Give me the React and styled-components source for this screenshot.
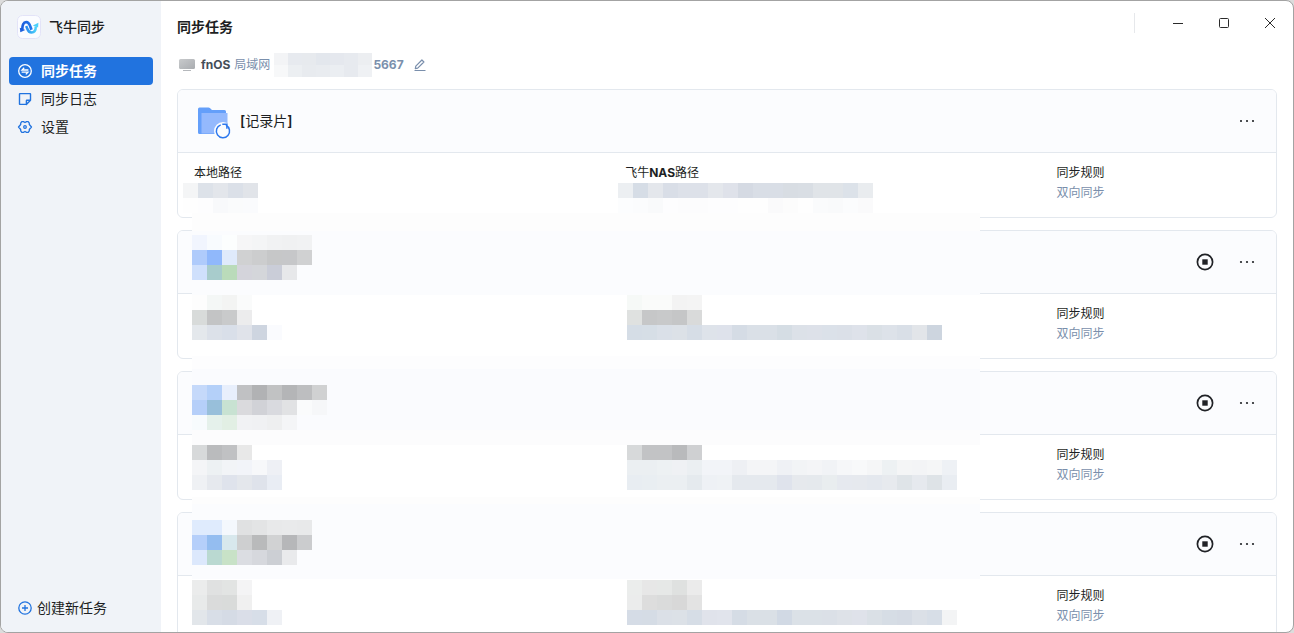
import React, { useState } from 'react';
import styled, { createGlobalStyle } from 'styled-components';

const GlobalStyle = createGlobalStyle`
  * {
    box-sizing: border-box;
  }

  body {
    margin: 0;
    background: #dcdcdc;
    color: #1d1f23;
    font-family: Inter, 'Noto Sans CJK SC', sans-serif;
    font-size: 14px;
    line-height: 20px;
  }

  h1, h2, dl, dd {
    margin: 0;
  }

  button {
    font: inherit;
    color: inherit;
    background: none;
    border: none;
    padding: 0;
    cursor: pointer;
  }

  svg {
    display: block;
    flex-shrink: 0;
  }
`;

const Window = styled.div`
  display: flex;
  height: 100vh;
  background: #fff;
  border: 1px solid #a3a3a3;
  border-radius: 8px;
  overflow: hidden;
`;

const Sidebar = styled.aside`
  display: flex;
  flex-direction: column;
  flex: 0 0 160px;
  padding: 0 8px 10px;
  background: #f0f3f8;
`;

const Brand = styled.div`
  display: flex;
  align-items: center;
  gap: 8px;
  height: 52px;
  margin-bottom: 4px;
  padding-left: 8px;
  font-weight: 500;
`;

const Nav = styled.nav`
  display: flex;
  flex-direction: column;
  flex: 1;
`;

const NavItem = styled.button`
  display: flex;
  align-items: center;
  gap: 8px;
  height: 28px;
  padding: 0 8px;
  border-radius: 4px;
  text-align: left;
  color: ${({ $active }) => ($active ? '#fff' : '#1d1f23')};
  background: ${({ $active }) => ($active ? '#2173df' : 'transparent')};
  font-weight: ${({ $active }) => ($active ? 700 : 400)};

  svg {
    color: ${({ $active }) => ($active ? '#fff' : '#2173df')};
  }
`;

const CreateButton = styled(NavItem)`
  gap: 4px;
`;

const Main = styled.main`
  flex: 1;
  min-width: 0;
  display: flex;
  flex-direction: column;
`;

const TitleBar = styled.header`
  display: flex;
  justify-content: space-between;
  height: 52px;
  padding-left: 16px;
`;

const PageTitle = styled.h1`
  align-self: center;
  font-size: 14px;
  line-height: 20px;
  font-weight: 700;
`;

const Controls = styled.div`
  display: flex;
  height: 44px;
  align-items: center;
`;

const Divider = styled.span`
  width: 1px;
  height: 20px;
  margin-right: 20px;
  background: #e6e8eb;
`;

const ControlButton = styled.button`
  display: grid;
  place-items: center;
  width: 46px;
  height: 44px;
`;

const Device = styled.div`
  display: flex;
  align-items: center;
  gap: 4px;
  height: 24px;
  margin-bottom: 12px;
  padding-left: 16px;
  font-size: 12px;
  color: #7a8fac;
`;

const DeviceName = styled.strong`
  font-weight: 700;
  color: #454e59;
`;

const Address = styled.span`
  display: flex;
  align-items: center;
  gap: 1px;
  font-weight: 700;
`;

const EditButton = styled.button`
  display: grid;
  place-items: center;
  width: 24px;
  height: 24px;
`;

const TaskList = styled.div`
  flex: 1;
  min-height: 0;
  padding: 0 16px;
  overflow: hidden;
`;

const Card = styled.article`
  position: relative;
  margin-bottom: 12px;
  border: 1px solid #e3e8ee;
  border-radius: 6px;
`;

const CardHeader = styled.div`
  display: flex;
  align-items: center;
  gap: 6px;
  height: 63px;
  padding: 0 15px 0 16px;
  background: #fbfcfe;
  border-bottom: 1px solid #e3e8ee;
  border-radius: 5px 5px 0 0;
`;

const TaskName = styled.h2`
  font-size: 14px;
  line-height: 20px;
  font-weight: 400;

  b {
    font-weight: 600;
  }
`;

const Actions = styled.div`
  display: flex;
  gap: 14px;
  margin-left: auto;
`;

const IconButton = styled.button`
  display: grid;
  place-items: center;
  width: 28px;
  height: 28px;
`;

const Fields = styled.dl`
  display: grid;
  grid-template-columns: 2fr 2fr 1fr;
  column-gap: 24px;
  height: 64px;
  padding: 10px 16px;
  font-size: 12px;
`;

const Field = styled.div`
  grid-column: ${({ $column }) => $column};

  dt strong {
    font-weight: 700;
  }

  dd {
    color: #7a8fac;
  }
`;

// Lies over the card and hides private names and paths.
const MosaicLayer = styled.svg`
  position: absolute;
  top: 0;
  left: 0;
  overflow: visible;
  pointer-events: none;
`;

const CELL = 15;

const Patch = ({ x, y, rows }) =>
  rows.map((row, r) =>
    row.split(' ').map((color, c) => (
      <rect key={`${r}-${c}`} x={x + c * CELL} y={y + r * CELL} width={CELL} height={CELL} fill={`#${color}`} />
    ))
  );

const Mosaic = ({ backdrops = [], patches }) => (
  <MosaicLayer width="802" height="127" shapeRendering="crispEdges" aria-hidden="true">
    {backdrops.map(([y, height, fill]) => (
      <rect key={y} x="14" y={y} width="788" height={height} fill={fill} />
    ))}
    {patches.map((patch) => (
      <Patch key={`${patch.x}-${patch.y}`} {...patch} />
    ))}
  </MosaicLayer>
);

const tasks = [
  {
    id: 1,
    name: '记录片',
    patches: [
      { x: 5, y: 93, rows: ['f4f5f6 dde2e9 e3e6eb dbe0e8 e1e4e9', 'fefefe fdfdfe f8f9fb fafbfc fafbfd'] },
      {
        x: 440,
        y: 93,
        rows: [
          'eceff2 d6dde6 e4e7ec d9dee7 dde1e9 dde1e9 e4e7ec dfe2ea d5dae3 d9dee6 d9dee6 d8dde3 d9dee4 e0e4e8 e0e4e8 dce2e9 e9ecef',
          'fcfdfe fbfcfd f9fafb fdfdfe fcfcfd fcfcfd fdfdfe fdfdfe fefefe fefefe fafafb fcfcfc fefefe fafbfc f9fafb fbfcfd fafafb',
        ],
      },
    ],
  },
  {
    id: 2,
    running: true,
    backdrops: [[-18, 18, '#fdfdfd'], [0, 64, '#fbfcfe'], [64, 60, '#fff']],
    patches: [
      {
        x: 14,
        y: 4,
        rows: [
          'f1f5fe f8fbfe fcfefe f6f6f7 f4f5f6 f1f2f3 f0f1f2 f1f2f3',
          'afcbfb 90b8fb dfeafb d0d1d2 cccdce c6c7c8 c6c7c9 d0d1d2',
          'cfe0fc a8cccc badbba d4d4db d4d6da cacdd8 e7e8ea',
        ],
      },
      {
        x: 14,
        y: 64,
        rows: [
          'fdfdfd f4f7f6 f3f4f3 fafbfb',
          'd8dbda c3c4c5 c9cacb ececed',
          'e4e8ec dce1e9 d9dfe9 e0e3ea ced5e0 fafbfe',
        ],
      },
      {
        x: 449,
        y: 64,
        rows: [
          'f6f9f7 fafbfa fafbfa f3f3f3 f4f4f4',
          'dfe1e0 c6c7c8 c8c9ca c5c6c7 d9dada',
          'd5dde6 d6dee6 dae0e8 dce1e7 d6dde6 dee3ea dee2eb d5dce5 dae0e7 dae0e7 d5dde4 dce1e8 dde1e9 dbe1e9 dbe0e8 dee2ea dae0e6 dde2e9 d9dfe7 e2e5e9 cdd5df',
        ],
      },
    ],
  },
  {
    id: 3,
    running: true,
    backdrops: [[-16, 13, '#fdfdfe'], [-3, 62, '#fafbfe'], [58, 15, '#fcfcfd'], [73, 48, '#fff']],
    patches: [
      {
        x: 14,
        y: 13,
        rows: [
          'c5d9fa b4d0f9 e8effc c0c1c3 b1b2b4 c1c2c3 b4b5b7 bdbec0 d0d1d2',
          'b5cff9 98bfda c8e2d2 dadadd d1d2d7 d9dadf e1e2e4 fafbfc f6f7f9',
          'f7fbfd e5f1eb e2efe4 f1f2f4 f0f1f3 eeeff0 f4f5f7',
        ],
      },
      {
        x: 14,
        y: 73,
        rows: [
          'd7d9da babbbd c0c1c3 e8e8e8',
          'f4f5f7 edf1f3 f2f4f7 f2f4f9 f7f8fa eef0f5',
          'eff1f4 e6e9ee dfe3ec e4e7ec dfe3eb e9edf4',
        ],
      },
      {
        x: 449,
        y: 73,
        rows: [
          'd7d9da c2c3c5 c2c3c5 b9babc cfd0d2',
          'ebeff2 ebeff2 edf1f3 eff1f4 ebeff2 f2f4f8 f2f4f8 eef0f4 f4f5f7 f4f5f7 eff1f5 f2f4f6 f4f5f7 f1f3f6 f6f7f9 f8f9fa f5f6f7 edf1f3 f4f5f6 f3f4f6 f5f6f7 eef1f5',
          'e8edf2 e9eef2 ebeff2 ebeff2 e5eaee eef1f5 eff2f5 e5e9ee e5e9ee e5e9ee dfe3ec e6e9ed e5e9ed e9edef e6e9ef e6e9ee e4e8ee e7eaee dfe4e8 e6e9ee dee3e7 e9edf2',
        ],
      },
    ],
  },
  {
    id: 4,
    running: true,
    backdrops: [[-16, 7, '#fdfdfd'], [-9, 75, '#fbfcfe'], [66, 60, '#fff']],
    patches: [
      {
        x: 14,
        y: 7,
        rows: [
          'dfebfd dfebfd f4f8fd e0e1e2 e3e4e5 e8e9ea e9eaeb e8e9ea',
          'b5cffa 94bdf0 d8e8ed cecfd0 b9babb d1d2d3 b6b7b9 cbccce',
          'dce8fc bad9d1 c8e2c7 dbdde2 d6d8dd cccfd4 e9eaec',
        ],
      },
      {
        x: 14,
        y: 67,
        rows: [
          'ebecec e0e1e1 e2e4e3 f4f4f5',
          'e8eaea dadbdb d9dbda f0f0f0',
          'e2e6ea d8dee7 d5dbe5 dadee8 d7dee8 eff1f5',
        ],
      },
      {
        x: 449,
        y: 67,
        rows: [
          'ebedec e7e7e7 e6e8e7 dfe1e0 ebebeb',
          'ebecec dddddd dadbdb d8d8d8 e3e3e3',
          'd5dce6 d5dce5 dbe0e7 dce1e7 d6dde6 e0e3eb e1e4ec d5dce5 dae0e6 dae0e6 d1d9e4 dbe1e7 dbe1e7 dbe0e7 dee2e8 dfe2ea dae0e6 d6dde5 d5dbe4 dbe0e7 d7dee7 f3f4f5',
        ],
      },
    ],
  },
];

const addressMosaic = [
  'f3f4f6 e7eaef e7eaee e3e7ed e5e8ee e7eaef eceef1',
  'f7f8f9 eceff2 e8ebef e9ecf0 ebeef2 e7eaef eff1f4',
];

const Logo = () => (
  <svg width="24" height="24" viewBox="0 0 24 24" aria-hidden="true">
    <defs>
      <linearGradient id="logoArch" x1="0" x2="1">
        <stop offset="0" stopColor="#1d5fdd" />
        <stop offset="1" stopColor="#2377ea" />
      </linearGradient>
      <linearGradient id="logoBowl" x1="0" x2="1">
        <stop offset="0" stopColor="#2a8bee" />
        <stop offset="1" stopColor="#4bd0fa" />
      </linearGradient>
    </defs>
    <rect x="0.5" y="0.5" width="23" height="23" rx="5" fill="#fbfcff" stroke="#e3e3f8" />
    <path d="M9.2 11l1 2.500c1 3 2.300 4 4.400 4 2.600 0 4.200-2.500 4.200-6" fill="none" stroke="url(#logoBowl)" strokeWidth="2.500" />
    <path d="M15.800 10.400l5.600-2.600-.3 4.800z" fill="#4bd0fa" />
    <path d="M5.300 14.500c0-4.300 1-7.300 3.900-7.300 2.400 0 3.400 2 4.400 5l.9 2.600" fill="none" stroke="url(#logoArch)" strokeWidth="2.700" />
    <path d="M2.800 12.800l5.500 2.200-5 2.300z" fill="#1d5fdd" />
  </svg>
);

const SyncIcon = () => (
  <svg width="16" height="16" viewBox="0 0 16 16" fill="none" stroke="currentColor" strokeWidth="1.3" aria-hidden="true">
    <circle cx="8" cy="8" r="6.3" />
    <path d="M11.400 7H5l2.200-2.300M4.600 9.100H11l-2.200 2.300" />
  </svg>
);

const NoteIcon = () => (
  <svg width="16" height="16" viewBox="0 0 16 16" fill="none" stroke="currentColor" strokeWidth="1.4" strokeLinejoin="round" aria-hidden="true">
    <path d="M9.400 13.400H2.900a.4.400 0 0 1-.4-.4V3a.4.400 0 0 1 .4-.4h10.200a.4.400 0 0 1 .4.400v6.300L9.400 13.400V9.700a.4.400 0 0 1 .4-.4h3.700" />
  </svg>
);

const SettingsIcon = () => (
  <svg width="16" height="16" viewBox="0 0 16 16" fill="none" stroke="currentColor" strokeWidth="1.300" strokeLinejoin="round" aria-hidden="true">
    <path d="M4.800 2.600h1.600l1.600.9 1.600-.9h1.600l1.100 1.600v1.300L14.500 8l-2.200 2.500v1.300l-1.100 1.600H9.600L8 12.500l-1.600.9H4.800l-1.100-1.600v-1.300L1.500 8l2.200-2.500V4.200z" />
    <circle cx="8" cy="8" r="1.300" />
  </svg>
);

const PlusIcon = () => (
  <svg width="16" height="16" viewBox="0 0 16 16" fill="none" stroke="currentColor" strokeWidth="1.3" aria-hidden="true">
    <circle cx="8" cy="8" r="6.2" />
    <path d="M8 5v6M5 8h6" />
  </svg>
);

const MonitorIcon = () => (
  <svg width="20" height="16" viewBox="0 0 20 16" aria-hidden="true">
    <defs>
      <linearGradient id="screen" x1="0" y1="0" x2="1" y2="1">
        <stop offset="0" stopColor="#c8cacc" />
        <stop offset="1" stopColor="#a9acb0" />
      </linearGradient>
    </defs>
    <rect x="2" y="2" width="16" height="10" rx="1.500" fill="url(#screen)" />
    <rect x="6" y="13" width="8" height="1" fill="#b5b8bc" />
  </svg>
);

const PencilIcon = () => (
  <svg width="14" height="14" viewBox="0 0 14 14" fill="none" stroke="currentColor" strokeWidth="1.2" strokeLinejoin="round" aria-hidden="true">
    <path d="M2.800 8.200L8.900 2l2 2-6.200 6.200-2.400.5zM1.500 12.500h11" />
  </svg>
);

const FolderIcon = () => (
  <svg width="40" height="40" viewBox="0 0 40 40" aria-hidden="true">
    <path d="M4 8a1.500 1.500 0 0 1 1.500-1.500h9a2 2 0 0 1 1.400.6L18 9h12.500A1.500 1.500 0 0 1 32 10.500V33H5.500A1.500 1.500 0 0 1 4 31.500z" fill="#649ffa" />
    <path d="M7.500 12H33.500v20.500h-26z" fill="#94b9fd" />
    <circle cx="29" cy="30" r="9" fill="#fbfcfe" />
    <path d="M31.900 24.200a6.600 6.600 0 1 1-5.200-.3" fill="none" stroke="#2d78ee" strokeWidth="1.500" />
    <path d="M28.300 23.300h4.600v4.400" fill="none" stroke="#2d78ee" strokeWidth="1.500" />
  </svg>
);

const StopIcon = () => (
  <svg width="20" height="20" viewBox="0 0 20 20" aria-hidden="true">
    <circle cx="10" cy="10" r="7.600" fill="none" stroke="#202226" strokeWidth="1.700" />
    <rect x="7.300" y="7.300" width="5.400" height="5.400" fill="#202226" />
  </svg>
);

const MoreIcon = () => (
  <svg width="16" height="16" viewBox="0 0 16 16" fill="#202226" aria-hidden="true">
    <circle cx="2" cy="8" r="1.100" />
    <circle cx="8" cy="8" r="1.100" />
    <circle cx="14" cy="8" r="1.100" />
  </svg>
);

const ControlIcon = ({ children }) => (
  <svg width="12" height="12" viewBox="0 0 12 12" fill="none" stroke="#2b2b2b" aria-hidden="true">
    {children}
  </svg>
);

const navItems = [
  { key: 'tasks', label: '同步任务', icon: <SyncIcon /> },
  { key: 'logs', label: '同步日志', icon: <NoteIcon /> },
  { key: 'settings', label: '设置', icon: <SettingsIcon /> },
];

const TaskCard = ({ task }) => (
  <Card>
    <CardHeader>
      {task.name && (
        <>
          <FolderIcon />
          <TaskName><b>[</b>{task.name}<b>]</b></TaskName>
        </>
      )}
      <Actions>
        {task.running && (
          <IconButton type="button" aria-label="停止">
            <StopIcon />
          </IconButton>
        )}
        <IconButton type="button" aria-label="更多">
          <MoreIcon />
        </IconButton>
      </Actions>
    </CardHeader>
    <Fields>
      {task.name && (
        <>
          <Field $column={1}>
            <dt>本地路径</dt>
          </Field>
          <Field $column={2}>
            <dt>飞牛<strong>NAS</strong>路径</dt>
          </Field>
        </>
      )}
      <Field $column={3}>
        <dt>同步规则</dt>
        <dd>双向同步</dd>
      </Field>
    </Fields>
    <Mosaic backdrops={task.backdrops} patches={task.patches} />
  </Card>
);

const App = () => {
  const [active, setActive] = useState('tasks');

  return (
    <>
      <GlobalStyle />
      <Window>
        <Sidebar>
          <Brand>
            <Logo />
            飞牛同步
          </Brand>
          <Nav>
            {navItems.map((item) => (
              <NavItem key={item.key} type="button" $active={active === item.key} onClick={() => setActive(item.key)}>
                {item.icon}
                {item.label}
              </NavItem>
            ))}
          </Nav>
          <CreateButton type="button">
            <PlusIcon />
            创建新任务
          </CreateButton>
        </Sidebar>
        <Main>
          <TitleBar>
            <PageTitle>同步任务</PageTitle>
            <Controls>
              <Divider />
              <ControlButton type="button" aria-label="最小化">
                <ControlIcon><path d="M1 6.500h10" /></ControlIcon>
              </ControlButton>
              <ControlButton type="button" aria-label="最大化">
                <ControlIcon><rect x="1.500" y="1.500" width="9" height="9" rx="1" /></ControlIcon>
              </ControlButton>
              <ControlButton type="button" aria-label="关闭">
                <ControlIcon><path d="M1 1l10 10M11 1L1 11" /></ControlIcon>
              </ControlButton>
            </Controls>
          </TitleBar>
          <Device>
            <MonitorIcon />
            <DeviceName>fnOS</DeviceName>
            <span>局域网</span>
            <Address>
              <svg width="98" height="24" viewBox="0 0 105 30" preserveAspectRatio="none" shapeRendering="crispEdges" aria-hidden="true">
                <Patch x={0} y={0} rows={addressMosaic} />
              </svg>
              5667
            </Address>
            <EditButton type="button" aria-label="编辑">
              <PencilIcon />
            </EditButton>
          </Device>
          <TaskList>
            {tasks.map((task) => (
              <TaskCard key={task.id} task={task} />
            ))}
          </TaskList>
        </Main>
      </Window>
    </>
  );
};

export default App;
